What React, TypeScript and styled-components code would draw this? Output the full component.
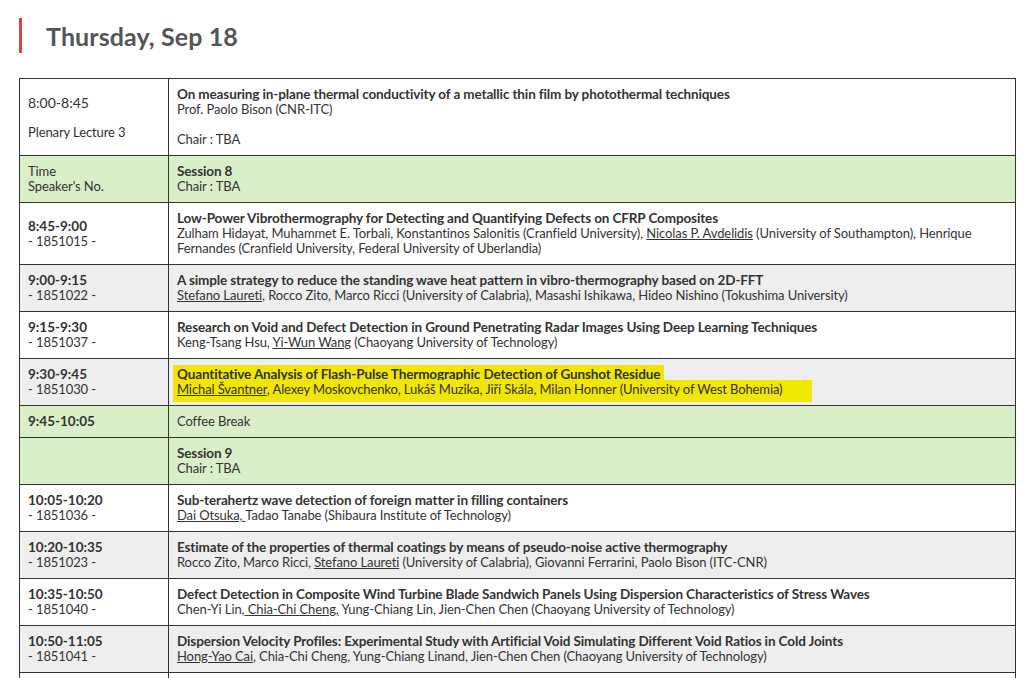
import React from "react";
import styled, { createGlobalStyle } from "styled-components";

const Global = createGlobalStyle`
  html, body { margin: 0; padding: 0; background: #fff; }
  body { font-family: "Lato", "Liberation Sans", sans-serif; color: #333; }
`;

const Page = styled.div`
  padding: 18px 14px 0 19px;
`;

const Heading = styled.h2`
  margin: 0 0 25px 0;
  border-left: 3px solid #e0403c;
  padding-left: 24px;
  height: 35px;
  display: flex;
  align-items: center;
  font-size: 25px;
  font-weight: 700;
  color: #555;
  letter-spacing: 0.1px;
`;

const Table = styled.table`
  border-collapse: collapse;
  width: 997px;
  font-size: 13px;
  letter-spacing: -0.1px;
  line-height: 15px;
  color: #333;
`;

type Variant = "white" | "grey" | "green";
const bg: Record<Variant, string> = {
  white: "#ffffff",
  grey: "#eeeeee",
  green: "#d9efc8",
};

const Row = styled.tr<{ $v: Variant }>`
  background: ${(p) => bg[p.$v]};
`;

const TimeCell = styled.td`
  width: 132px;
  border: 1px solid #333;
  padding: 8px;
  vertical-align: middle;
`;

const ContentCell = styled.td`
  border: 1px solid #333;
  padding: 8px;
  vertical-align: top;
`;

const Time = styled.div<{ $plain?: boolean }>`
  font-weight: ${(p) => (p.$plain ? 400 : 700)};
  font-size: ${(p) => (p.$plain ? "14px" : "13.5px")};
  letter-spacing: 0;
`;

const Title = styled.div`
  font-weight: 700;
  font-size: 13.5px;
  letter-spacing: -0.12px;
`;

const Line = styled.div``;

const Blank = styled.div`
  height: 15px;
`;

const U = styled.span`
  text-decoration: underline;
`;

const Mark = styled.span<{ $extra?: number; $below?: number }>`
  background: #f0e600;
  padding: 1px ${(p) => 4 + (p.$extra ?? 0)}px ${(p) => 1 + (p.$below ?? 0)}px 4px;
  margin-left: -4px;
`;

type Talk = {
  time: string;
  no: string;
  title: string;
  authors: React.ReactNode;
  v: Variant;
};

const talksA: Talk[] = [
  {
    time: "8:45-9:00",
    no: "- 1851015 -",
    title:
      "Low-Power Vibrothermography for Detecting and Quantifying Defects on CFRP Composites",
    authors: (
      <>
        Zulham Hidayat, Muhammet E. Torbali, Konstantinos Salonitis (Cranfield
        University), <U>Nicolas P. Avdelidis</U> (University of Southampton),
        Henrique Fernandes (Cranfield University, Federal University of
        Uberlandia)
      </>
    ),
    v: "white",
  },
  {
    time: "9:00-9:15",
    no: "- 1851022 -",
    title:
      "A simple strategy to reduce the standing wave heat pattern in vibro-thermography based on 2D-FFT",
    authors: (
      <>
        <U>Stefano Laureti</U>, Rocco Zito, Marco Ricci (University of
        Calabria), Masashi Ishikawa, Hideo Nishino (Tokushima University)
      </>
    ),
    v: "grey",
  },
  {
    time: "9:15-9:30",
    no: "- 1851037 -",
    title:
      "Research on Void and Defect Detection in Ground Penetrating Radar Images Using Deep Learning Techniques",
    authors: (
      <>
        Keng-Tsang Hsu, <U>Yi-Wun Wang</U> (Chaoyang University of Technology)
      </>
    ),
    v: "white",
  },
];

const talksB: Talk[] = [
  {
    time: "10:05-10:20",
    no: "- 1851036 -",
    title: "Sub-terahertz wave detection of foreign matter in filling containers",
    authors: (
      <>
        <U>Dai Otsuka, </U>Tadao Tanabe (Shibaura Institute of Technology)
      </>
    ),
    v: "white",
  },
  {
    time: "10:20-10:35",
    no: "- 1851023 -",
    title:
      "Estimate of the properties of thermal coatings by means of pseudo-noise active thermography",
    authors: (
      <>
        Rocco Zito, Marco Ricci, <U>Stefano Laureti</U> (University of
        Calabria), Giovanni Ferrarini, Paolo Bison (ITC-CNR)
      </>
    ),
    v: "grey",
  },
  {
    time: "10:35-10:50",
    no: "- 1851040 -",
    title:
      "Defect Detection in Composite Wind Turbine Blade Sandwich Panels Using Dispersion Characteristics of Stress Waves",
    authors: (
      <>
        Chen-Yi Lin,<U> Chia-Chi Cheng,</U> Yung-Chiang Lin, Jien-Chen Chen
        (Chaoyang University of Technology)
      </>
    ),
    v: "white",
  },
  {
    time: "10:50-11:05",
    no: "- 1851041 -",
    title:
      "Dispersion Velocity Profiles: Experimental Study with Artificial Void Simulating Different Void Ratios in Cold Joints",
    authors: (
      <>
        <U>Hong-Yao Cai</U>, Chia-Chi Cheng, Yung-Chiang Linand, Jien-Chen Chen
        (Chaoyang University of Technology)
      </>
    ),
    v: "grey",
  },
  {
    time: "11:05-11:20",
    no: "- 1851042 -",
    title: "Closing Remarks",
    authors: <>Organizing Committee</>,
    v: "white",
  },
];

const TalkRow: React.FC<{ t: Talk }> = ({ t }) => (
  <Row $v={t.v}>
    <TimeCell>
      <Time>{t.time}</Time>
      <Line>{t.no}</Line>
    </TimeCell>
    <ContentCell>
      <Title>{t.title}</Title>
      <Line>{t.authors}</Line>
    </ContentCell>
  </Row>
);

export default function App() {
  return (
    <>
      <Global />
      <Page>
        <Heading>Thursday, Sep 18</Heading>
        <Table>
          <tbody>
            <Row $v="white">
              <TimeCell>
                <Time $plain>8:00-8:45</Time>
                <Blank />
                <Line>Plenary Lecture 3</Line>
              </TimeCell>
              <ContentCell>
                <Title>
                  On measuring in-plane thermal conductivity of a metallic thin
                  film by photothermal techniques
                </Title>
                <Line>Prof. Paolo Bison (CNR-ITC)</Line>
                <Blank />
                <Line>Chair : TBA</Line>
              </ContentCell>
            </Row>
            <Row $v="green">
              <TimeCell>
                <Line>Time</Line>
                <Line>Speaker's No.</Line>
              </TimeCell>
              <ContentCell>
                <Title>Session 8</Title>
                <Line>Chair : TBA</Line>
              </ContentCell>
            </Row>
            {talksA.map((t) => (
              <TalkRow key={t.no} t={t} />
            ))}
            <Row $v="grey">
              <TimeCell>
                <Time>9:30-9:45</Time>
                <Line>- 1851030 -</Line>
              </TimeCell>
              <ContentCell>
                <Title>
                  <Mark>
                    Quantitative Analysis of Flash-Pulse Thermographic Detection
                    of Gunshot Residue
                  </Mark>
                </Title>
                <Line>
                  <Mark $extra={26} $below={4}>
                    <U>Michal Švantner</U>, Alexey Moskovchenko, Lukáš Muzika,
                    Jiří Skála, Milan Honner (University of West Bohemia)
                  </Mark>
                </Line>
              </ContentCell>
            </Row>
            <Row $v="green">
              <TimeCell>
                <Time>9:45-10:05</Time>
              </TimeCell>
              <ContentCell>
                <Line>Coffee Break</Line>
              </ContentCell>
            </Row>
            <Row $v="green">
              <TimeCell />
              <ContentCell>
                <Title>Session 9</Title>
                <Line>Chair : TBA</Line>
              </ContentCell>
            </Row>
            {talksB.map((t) => (
              <TalkRow key={t.no} t={t} />
            ))}
          </tbody>
        </Table>
      </Page>
    </>
  );
}
